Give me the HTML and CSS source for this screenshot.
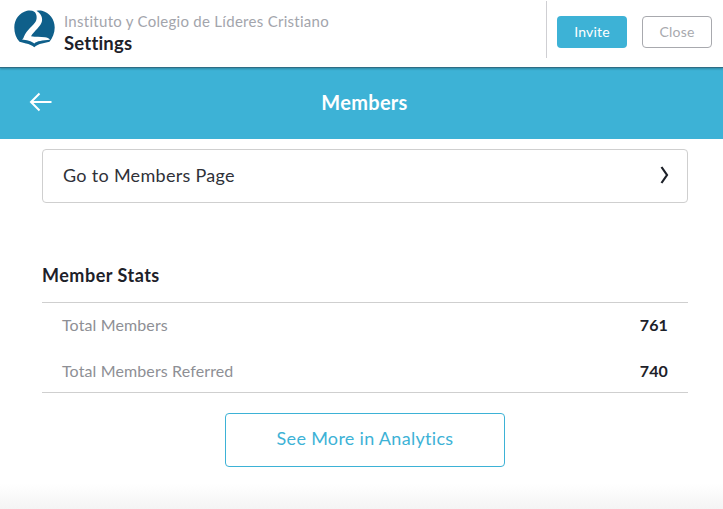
FILE: index.html
```html
<!DOCTYPE html>
<html lang="en">
<head>
<meta charset="utf-8">
<title>Members</title>
<link rel="stylesheet" href="styles.css">
</head>
<body>
<header class="topbar">
  <div class="brand">
    <svg class="logo" width="41" height="38" viewBox="0 0 41 38" aria-hidden="true">
      <path fill="#0f5f8a" d="M13 .8C16 .2 18.500 .6 20.500 1.800C22.500 .6 25.500 .2 28 .8C35.500 2.500 40.700 9.500 40.700 17.500C40.700 23 38.500 28 35.500 31.800L28 33.500C25 34.200 22 35.300 20.300 37.300C18.500 35.300 15 34.200 12 33.500L5.500 31.800C2 28 .3 23 .3 17.500C.3 9.500 5.500 2.500 13 .8Z"/>
      <path fill="#fff" d="M19.500 .8C22.500 3 23.500 7.500 22 11C19.500 15.500 12.500 20 10 26.500C9.500 28 9 29 8 29.500C12 30 18 31 20.300 33.500C23 31 28 30.500 36 29.800C35 28 33 27.500 31 27.300C26 26.800 22 27 17 26.300C20 21 27 16.500 28 11C28.800 6.500 26 2.500 21.500 .3Z"/>
    </svg>
    <div class="brand-text">
      <div class="org">Instituto y Colegio de Líderes Cristiano</div>
      <div class="page">Settings</div>
    </div>
  </div>
  <div class="actions">
    <button class="btn btn-invite" type="button">Invite</button>
    <button class="btn btn-close" type="button">Close</button>
  </div>
</header>
<div class="titlebar">
  <svg class="back" width="24" height="20" viewBox="0 0 24 20" aria-hidden="true">
    <path d="M22.500 10H2M10.500 1.500L2 10l8.500 8.500" fill="none" stroke="#fff" stroke-width="2"/>
  </svg>
  <h1 class="title">Members</h1>
</div>
<main class="content">
  <a class="link-card">
    <span>Go to Members Page</span>
    <svg class="chev" width="9" height="18" viewBox="0 0 9 18" aria-hidden="true">
      <path d="M1.500 1L7 9l-5.500 8" fill="none" stroke="#1d2129" stroke-width="2.200"/>
    </svg>
  </a>
  <h2 class="section">Member Stats</h2>
  <div class="stats">
    <div class="row"><span>Total Members</span><b>761</b></div>
    <div class="row"><span>Total Members Referred</span><b>740</b></div>
  </div>
  <div class="more-wrap"><button class="more" type="button">See More in Analytics</button></div>
</main>
<div class="fade"></div>
</body>
</html>
```
FILE: styles.css
```css
* { box-sizing: border-box; }
html, body { margin: 0; height: 100%; }
body {
  width: 723px; height: 509px; overflow: hidden; position: relative;
  background: #fff; color: #1d2129;
  font-family: "Lato", "Liberation Sans", sans-serif;
}
.topbar {
  height: 68px; display: flex; justify-content: space-between; align-items: center;
  background: #fff; border-bottom: 1px solid #2f6d85;
  box-shadow: 0 1px 2px rgba(0,0,0,.25); position: relative; z-index: 1;
}
.brand { display: flex; align-items: center; padding-left: 14px; gap: 9px; }
.logo { display: block; margin-top: -9px; }
.brand-text { margin-top: -2px; }
.org { font-size: 15px; line-height: 20px; color: #a3a5ac; letter-spacing: .28px; }
.page { font-size: 18.500px; line-height: 24px; font-weight: 700; color: #1d2129; letter-spacing: .2px; }
.actions {
  display: flex; align-items: center; gap: 15px; height: 57px; margin-top: -8px;
  border-left: 1px solid #cfcfd3; padding: 4px 11px 0 10px;
}
.btn { width: 70px; height: 32px; border-radius: 4px; font: inherit; font-size: 14px; padding: 0; letter-spacing: .2px; }
.btn-invite { background: #3db2d6; border: 0; color: #fff; }
.btn-close { background: #fff; border: 1px solid #a8a9ae; color: #a8a9ae; }
.titlebar {
  height: 71px; background: #3db2d6; display: flex; align-items: center; justify-content: center; position: relative;
}
.back { position: absolute; left: 29px; top: 24px; }
.title { margin: 0 0 4px 6px; font-size: 20px; font-weight: 700; color: #fff; letter-spacing: .3px; }
.content { padding: 10px 35px 0 42px; }
.link-card {
  display: flex; justify-content: space-between; align-items: center;
  height: 54px; border: 1px solid #cfcfcf; border-radius: 4px; padding: 0 18px 2px 20px;
  font-size: 18px; letter-spacing: .3px; color: #2f3138;
}
.section { margin: 61px 0 0; font-size: 18px; line-height: 22px; font-weight: 700; letter-spacing: .5px; }
.stats { margin-top: 16px; border-top: 1px solid #cfcfcf; border-bottom: 1px solid #cfcfcf; padding: 0 20px; height: 91px; }
.row { display: flex; justify-content: space-between; align-items: center; height: 46px; padding-bottom: 4px; font-size: 16px; color: #8e8f95; letter-spacing: .12px; }
.row b { color: #1d2129; font-size: 16px; }
.more-wrap { display: flex; justify-content: center; margin-top: 20px; }
.more {
  width: 280px; height: 54px; background: #fff; border: 1px solid #3db2d6; border-radius: 4px;
  font: inherit; font-size: 18px; color: #3db2d6; letter-spacing: .3px; padding: 0 0 4px;
}
.fade { position: absolute; left: 0; right: 0; bottom: 0; height: 25px; background: linear-gradient(rgba(245,245,245,0), #f4f4f4); }
```
